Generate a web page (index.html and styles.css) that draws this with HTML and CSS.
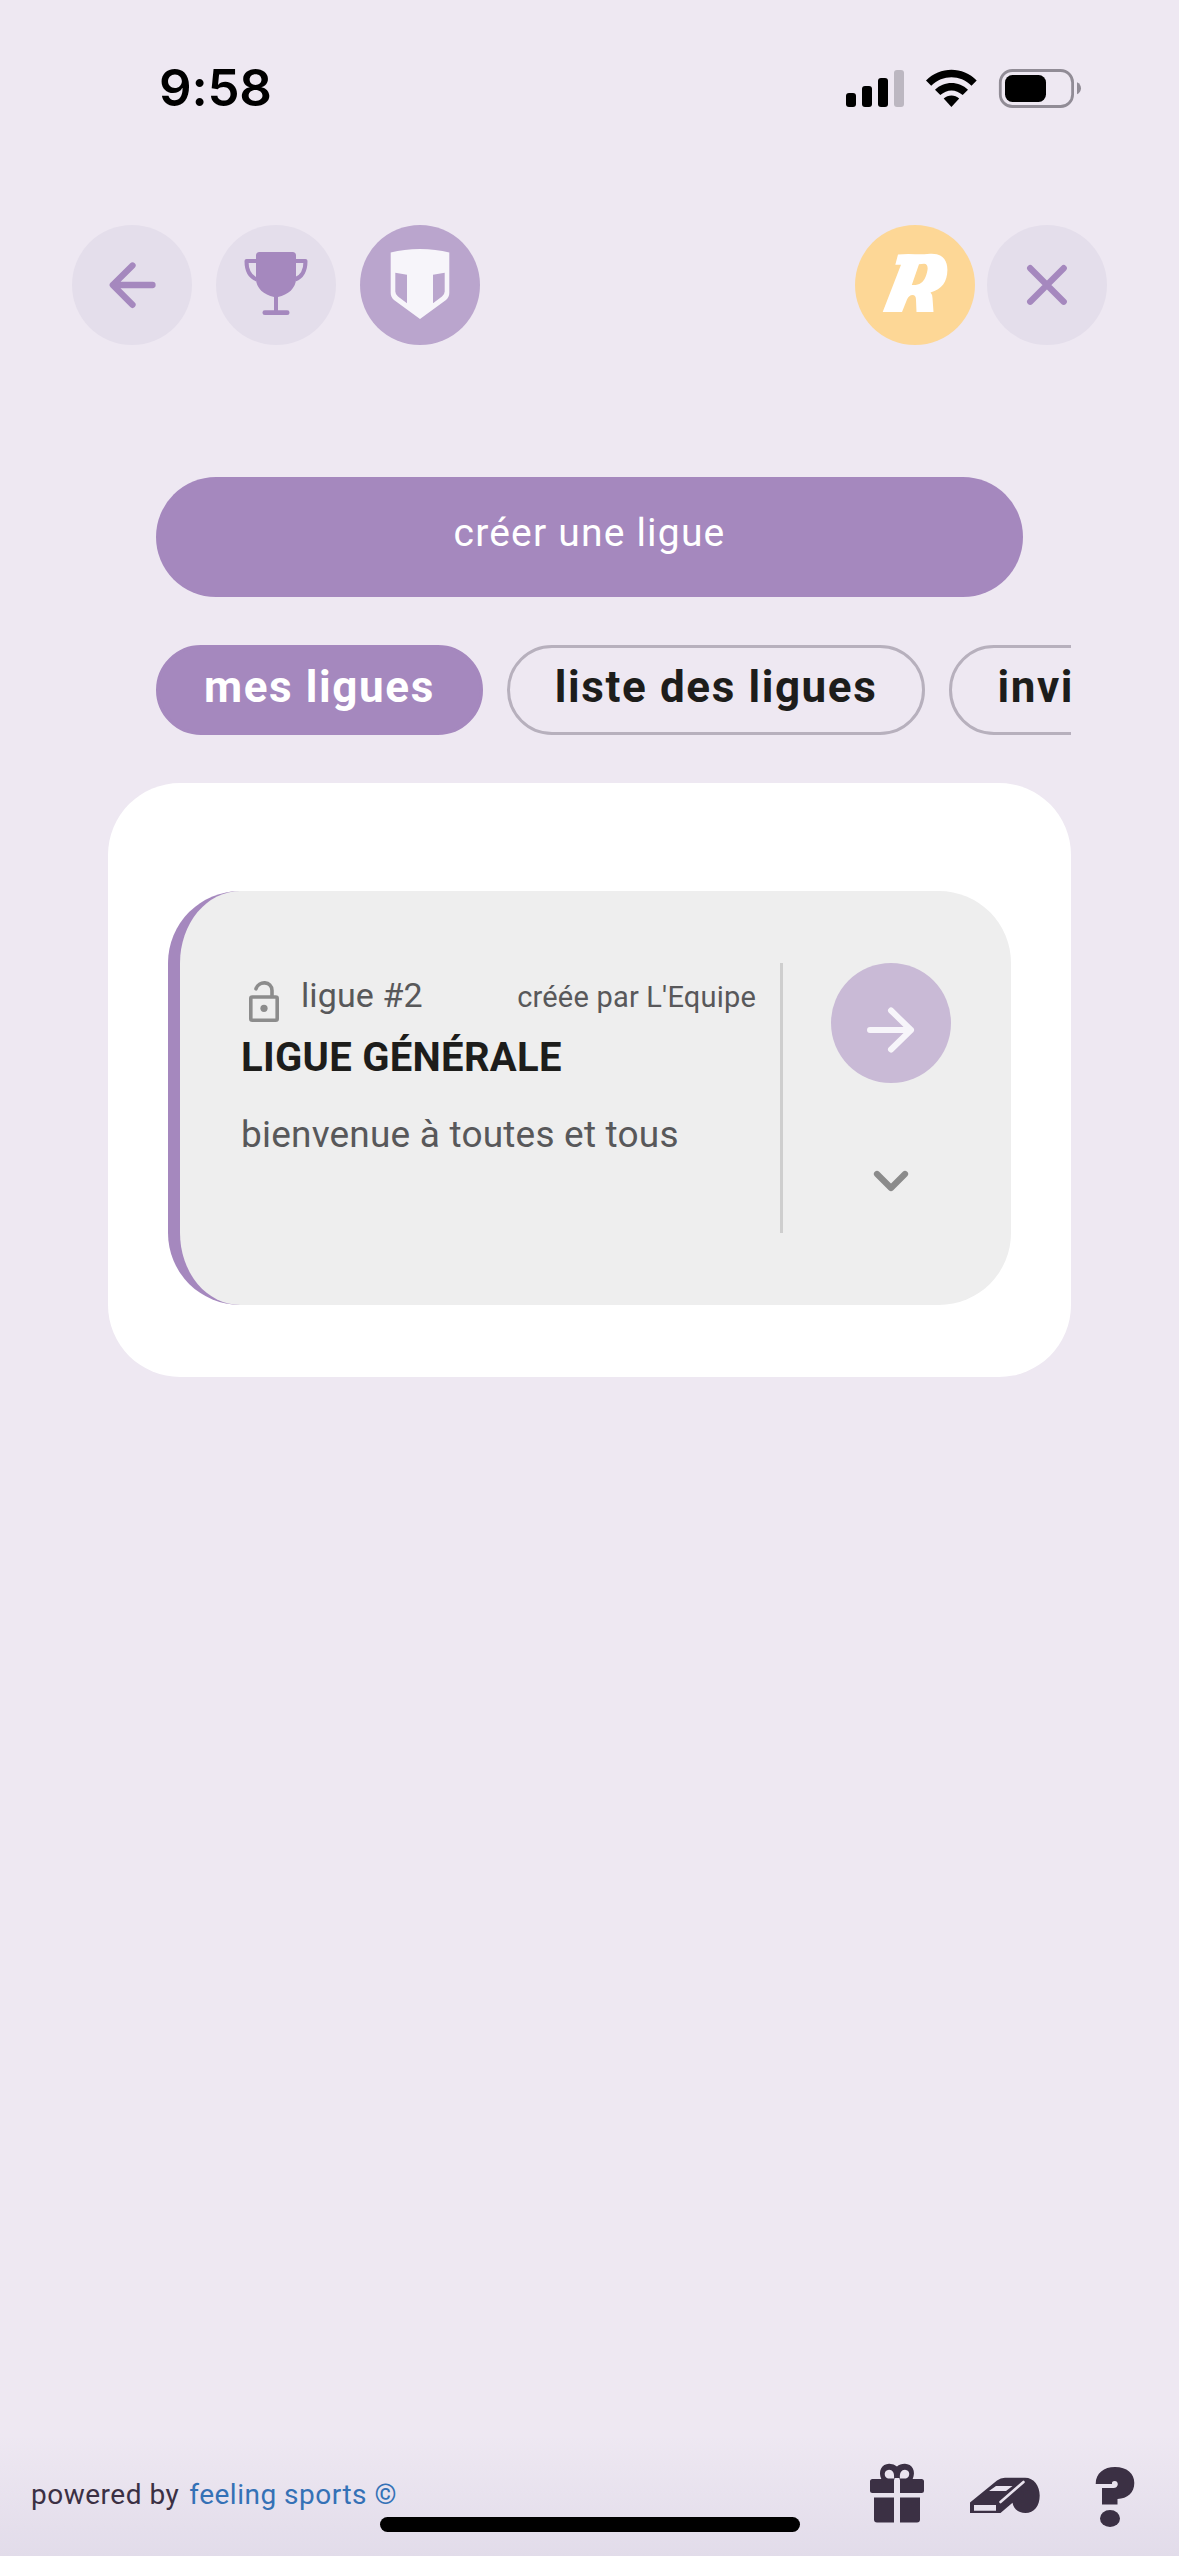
FILE: index.html
```html
<!DOCTYPE html>
<html lang="fr">
<head>
<meta charset="utf-8">
<title>Mes ligues</title>
<link rel="stylesheet" href="styles.css">
</head>
<body>
<div class="app">
  <header class="status">
    <span class="time">9:58</span>
    <svg class="status-icons" viewBox="846 66 236 42" width="236" height="42">
      <rect x="846" y="92" width="10" height="14" rx="3"/>
      <rect x="862" y="85" width="10" height="21" rx="3"/>
      <rect x="878" y="77" width="10" height="29" rx="3"/>
      <rect x="894" y="69" width="10" height="37" rx="3" fill="#bcb7c1"/>
      <path d="M926 79.500C940 65.200 963 65.200 976.700 79.500L971.500 84.800C960 73.500 943 73.500 931.200 84.800Z"/>
      <path d="M935 88.800C944 79.800 959 79.800 968 88.800L962.700 94.100C956 87.800 947 87.800 940.300 94.100Z"/>
      <path d="M943.700 97.600C948 93.600 955 93.600 959.200 97.600L951.400 106Z"/>
      <rect x="1000.300" y="69.500" width="72.300" height="36" rx="12" fill="none" stroke="#918c96" stroke-width="2.800"/>
      <rect x="1005" y="74" width="41" height="27" rx="7.500"/>
      <path d="M1077 81.300C1082.300 83.500 1082.300 91 1077 93.200Z" fill="#918c96"/>
    </svg>
  </header>

  <nav class="toolbar">
    <button class="round" aria-label="retour"><svg viewBox="0 0 120 120"><path class="line" d="M80.500 60H41M60.500 40.500L40.800 60L60.500 79.800"/></svg></button>
    <button class="round" aria-label="classement"><svg viewBox="0 0 120 120"><path fill="#a588be" d="M43.500 27H76.500Q80 27 80 30.500V54C80 63 72 70 62 72V85.300H71.200A2.300 2.300 0 0 1 71.200 90H48.800A2.300 2.300 0 0 1 48.800 85.300H58V72C48 70 40 63 40 54V30.500Q40 27 43.500 27Z"/><path fill="none" stroke="#a588be" stroke-width="4" stroke-linejoin="round" d="M41 36H30.500C30.500 46 34 52 41 54.500M79 36H89.500C89.500 46 86 52 79 54.500"/></svg></button>
    <button class="round round-shield" aria-label="équipe"><svg viewBox="0 0 120 120"><path fill="#f7f5fa" fill-rule="evenodd" d="M30.700 27.500Q44 24 60 24T89.300 27.500V68Q89.300 72 86 75L60 94L34 75Q30.700 72 30.700 68ZM35.300 47.700L47 49.700V78.300L38 71.500Q35.300 69 35.300 66.500ZM84.700 47.700L73 49.700V78.300L82 71.500Q84.700 69 84.700 66.500Z"/></svg></button>
    <button class="round round-gold" aria-label="récompenses"><svg viewBox="0 0 120 120"><path fill="#fff" fill-rule="evenodd" d="M43 29.500Q52 28.500 60 29.200Q66 29.700 75 28.700C86 28 92.500 34 92.400 45C92.200 57 87 64 75.500 67.500Q77.500 69.500 77.500 73L78.500 87H61.500L61 75Q61 70 57.500 70Q54 70 52 74.500L47 87H27.700L46 39.700H40.300ZM64 39.300L56.800 60C64 60.500 68 58 70.500 52C74 43.500 73 38.500 69 38.700Z"/></svg></button>
    <button class="round" aria-label="fermer"><svg viewBox="0 0 120 120"><path class="line" d="M43.200 43.200L76.700 76.700M76.700 43.200L43.200 76.700"/></svg></button>
  </nav>

  <main class="content">
    <button class="create">créer une ligue</button>
    <div class="tabs">
      <button class="tab tab-active">mes ligues</button>
      <button class="tab">liste des ligues</button>
      <button class="tab">invitations</button>
    </div>
    <section class="panel">
      <article class="league">
        <div class="info">
          <div class="meta">
            <svg class="lock" viewBox="0 0 30 41" width="30" height="41"><rect x="1.800" y="16" width="26.400" height="23.200" rx="1.500" fill="none" stroke="#8c8c8c" stroke-width="3.600"/><path fill="none" stroke="#8c8c8c" stroke-width="3.600" stroke-linecap="round" d="M7 7.800C9.500 -.5 23 -.2 23 9.500V15"/><circle cx="15" cy="27.300" r="3.600" fill="#8c8c8c"/></svg>
            <span class="rank">ligue #2</span>
            <span class="author">créée par L'Equipe</span>
          </div>
          <h2 class="name">LIGUE GÉNÉRALE</h2>
          <p class="desc">bienvenue à toutes et tous</p>
        </div>
        <div class="actions">
          <button class="round round-go" aria-label="ouvrir"><svg viewBox="0 0 120 120"><path class="line line-go" d="M39 67H80M60 47.500L80 67L60 86.500"/></svg></button>
          <svg class="chevron" viewBox="0 0 36 22" width="36" height="22"><path fill="none" stroke="#8b8b8b" stroke-width="6.200" stroke-linecap="round" stroke-linejoin="round" d="M4 4L18 18L32 4"/></svg>
        </div>
      </article>
    </section>
  </main>

  <footer class="footer">
    <span class="powered">powered by</span>
    <a class="brand">feeling sports ©</a>
    <svg class="footer-icons" viewBox="868 2460 268 68" width="268" height="68">
      <g fill="#3b3044">
        <path d="M872.500 2478H894V2492H872.500Q870 2492 870 2489.500V2480.500Q870 2478 872.500 2478ZM900 2478H921.500Q924 2478 924 2480.500V2489.500Q924 2492 921.500 2492H900ZM874 2496.500H894V2521.500H877Q874 2521.500 874 2518.500ZM900 2496.500H920V2518.500Q920 2521.500 917 2521.500H900Z"/>
        <path fill-rule="evenodd" d="M881.500 2478.500C877.500 2470 882 2463 889 2462.800Q894 2462.700 897 2465.600Q900 2462.700 905 2462.800C912 2463 916.500 2470 912.500 2478.500H899.500V2477H894.500V2478.500ZM894 2477.500H888C883.500 2476.500 883.500 2469 889 2468.800C893.500 2469 894.500 2473 894 2477.500ZM900 2477.500H906C910.500 2476.500 910.500 2469 905 2468.800C900.500 2469 899.500 2473 900 2477.500Z"/>
        <path fill-rule="evenodd" d="M970 2501.500L997 2479.500Q1000.500 2476.800 1005 2476.800H1025C1034 2476.800 1039.700 2485 1039.700 2494.500C1039.700 2505 1034 2512 1025.500 2512C1018 2512 1013.500 2507.500 1012.500 2501.800L1000.500 2512H970ZM996 2485L989 2490H1006L1012.500 2485ZM974 2504V2509.700H996V2504Z"/>
        <path d="M1095.700 2483C1095.700 2472 1104 2466 1115 2466C1127 2466 1134.300 2472.500 1134.300 2482C1134.300 2491.500 1127.500 2497.700 1117.500 2498V2503.500H1102V2487H1113.500C1119 2487 1119 2480 1114.700 2480C1112.500 2480 1111.800 2481 1112 2483Z"/>
        <ellipse cx="1110" cy="2517.500" rx="10" ry="8.500"/>
      </g>
      <path fill="none" stroke="#e9e3ee" stroke-width="2.600" stroke-linecap="round" d="M1000.500 2501L1023.500 2481"/>
    </svg>
    <span class="home-bar"></span>
  </footer>
</div>
</body>
</html>
```
FILE: styles.css
```css
* { box-sizing: border-box; }
body { margin: 0; background: #eee8f2; font-family: Roboto, "Liberation Sans", sans-serif; color: #1d1d1b; }
button { margin: 0; padding: 0; border: 0; font: inherit; color: inherit; }

.app { display: flex; flex-direction: column; width: 1179px; height: 2556px; overflow: hidden; }

.status { display: flex; justify-content: space-between; align-items: center; height: 225px; padding: 0 97px 50px 159px; }
.time { font: 600 51px/60px Inter, sans-serif; color: #000; letter-spacing: -.2px; }

.toolbar { display: flex; gap: 24px; padding: 0 72px; }
.round { flex: none; width: 120px; height: 120px; border-radius: 50%; background: #e4deeb; }
.round svg { display: block; width: 120px; height: 120px; }
.round-shield { background: #baa5cd; }
.round-gold { background: #fdd796; margin-left: auto; margin-right: -12px; }
.round-go { background: #c9bad6; }
.line { fill: none; stroke: #a588be; stroke-width: 6.300px; stroke-linecap: round; stroke-linejoin: round; }
.line-go { stroke: #f7f5fa; stroke-width: 6px; }

.content { padding: 132px 108px 0; }
.create { display: block; width: 867px; height: 120px; margin-left: 48px; padding-bottom: 9px; border-radius: 60px; background: #a588be; color: #fff; font-size: 39px; letter-spacing: 1.200px; }

.tabs { display: flex; gap: 24px; margin: 48px 0; padding-left: 48px; overflow: hidden; }
.tab { flex: none; height: 90px; padding: 0 45px 6px; border: 3px solid #b7b0bd; border-radius: 45px; background: none; font-size: 44px; font-weight: 700; letter-spacing: 1.600px; white-space: nowrap; }
.tab-active { border-color: #a588be; background: #a588be; color: #fff; }

.panel { padding: 108px 60px 72px; border-radius: 72px; background: #fff; }
.league { display: flex; height: 414px; padding: 72px 60px 72px 61px; border-left: 12px solid #a588be; border-radius: 72px; background: #eee; color: #58585a; }
.info { width: 542px; padding-right: 24px; border-right: 3px solid #cecece; }
.meta { display: flex; align-items: center; height: 64px; }
.lock { margin: 12px 22px 0 8px; }
.rank { font-size: 34px; letter-spacing: .100px; }
.author { margin: 3px 0 0 auto; font-size: 29px; letter-spacing: .200px; white-space: nowrap; }
.name { margin: 1px 0 0; font-size: 40px; line-height: 60px; font-weight: 700; letter-spacing: .300px; color: #1d1d1b; white-space: nowrap; }
.desc { margin: 19px 0 0; font-size: 37px; line-height: 56px; letter-spacing: .200px; white-space: nowrap; }
.actions { display: flex; flex-direction: column; align-items: center; margin-left: 48px; }
.chevron { margin-top: 87px; }

.footer { position: relative; display: flex; align-items: center; height: 120px; margin-top: auto; padding: 0 43px 3px 31px; background: linear-gradient(#eee8f2, #e2dcea); font-size: 28px; letter-spacing: .500px; color: #3b3044; }
.brand { margin-left: 10px; color: #3471b6; }
.footer-icons { margin-left: auto; }
.home-bar { position: absolute; left: 380px; bottom: 24px; width: 420px; height: 15px; border-radius: 8px; background: #000; }
```
